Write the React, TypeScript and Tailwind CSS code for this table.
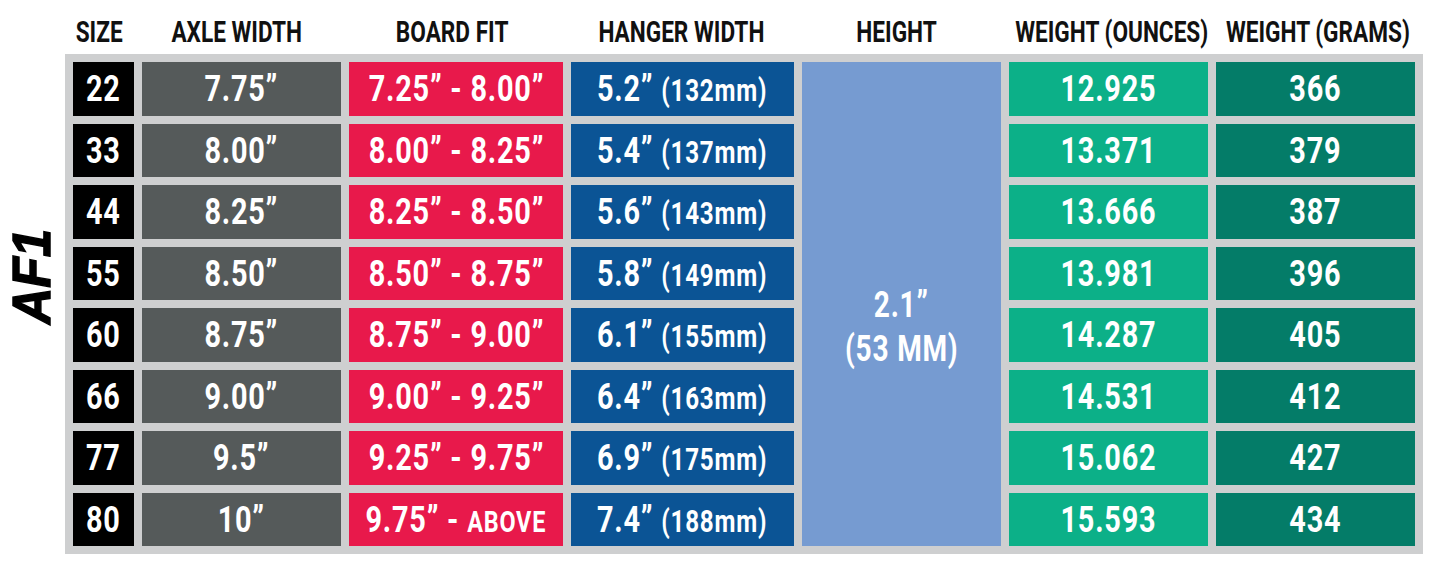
import React from "react";

const rows = [
  { s: "22", a: "7.75”", b1: "7.25” - 8.00”", b2: "", h1: "5.2”", h2: "(132mm)", oz: "12.925", g: "366" },
  { s: "33", a: "8.00”", b1: "8.00” - 8.25”", b2: "", h1: "5.4”", h2: "(137mm)", oz: "13.371", g: "379" },
  { s: "44", a: "8.25”", b1: "8.25” - 8.50”", b2: "", h1: "5.6”", h2: "(143mm)", oz: "13.666", g: "387" },
  { s: "55", a: "8.50”", b1: "8.50” - 8.75”", b2: "", h1: "5.8”", h2: "(149mm)", oz: "13.981", g: "396" },
  { s: "60", a: "8.75”", b1: "8.75” - 9.00”", b2: "", h1: "6.1”", h2: "(155mm)", oz: "14.287", g: "405" },
  { s: "66", a: "9.00”", b1: "9.00” - 9.25”", b2: "", h1: "6.4”", h2: "(163mm)", oz: "14.531", g: "412" },
  { s: "77", a: "9.5”", b1: "9.25” - 9.75”", b2: "", h1: "6.9”", h2: "(175mm)", oz: "15.062", g: "427" },
  { s: "80", a: "10”", b1: "9.75” - ", b2: "ABOVE", h1: "7.4”", h2: "(188mm)", oz: "15.593", g: "434" },
];

const font = { fontFamily: "Roboto, 'Liberation Sans', sans-serif" } as const;

function Cell({ bg, children }: { bg: string; children: React.ReactNode }) {
  return (
    <div className={`${bg} flex items-center justify-center text-white overflow-visible`}>
      <span className="inline-block whitespace-nowrap scale-x-[0.78] text-[37px] leading-none font-bold tracking-[1px]">
        {children}
      </span>
    </div>
  );
}

const headers = [
  { t: "SIZE", c: "-translate-x-[4px]" },
  { t: "AXLE WIDTH", c: "-translate-x-[5px]" },
  { t: "BOARD FIT", c: "-translate-x-[4px]" },
  { t: "HANGER WIDTH", c: "-translate-x-[1px]" },
  { t: "HEIGHT", c: "-translate-x-[5px]" },
  { t: "WEIGHT (OUNCES)", c: "translate-x-[3px]" },
  { t: "WEIGHT (GRAMS)", c: "translate-x-[2px]" },
];

export default function App() {
  return (
    <div className="w-[1445px] h-[568px] bg-white" style={font}>
      <div className="pl-[73px] h-[54px] grid grid-cols-[61px_199px_214px_223px_199px_199px_199px] gap-x-2 items-center">
        {headers.map((h) => (
          <div key={h.t} className="flex justify-center pt-[10px]">
            <span className={`inline-block whitespace-nowrap scale-x-[0.78] text-[29px] leading-none font-bold text-[#111] ${h.c}`}>
              {h.t}
            </span>
          </div>
        ))}
      </div>
      <div className="flex">
        <div className="w-[65px] flex items-center justify-center pb-[56px] pr-[2px]">
          <span
            className="inline-block -rotate-90 scale-x-[0.95] whitespace-nowrap text-[53px] leading-none font-bold italic text-black [-webkit-text-stroke:1.5px_black]"
            style={{ fontFamily: "'Liberation Sans', Arial, sans-serif" }}
          >
            AF1
          </span>
        </div>
        <div className="bg-[#cecfd0] p-2 grid grid-cols-[61px_199px_214px_223px_199px_199px_199px] grid-rows-[repeat(8,53.5px)] gap-2">
          <div className="col-start-5 row-start-1 row-span-8 bg-[#769bd1] flex flex-col items-center justify-center pt-[46px] text-white">
            <span className="inline-block whitespace-nowrap scale-x-[0.78] text-[36px] leading-[44px] font-bold tracking-[1px]">2.1”</span>
            <span className="inline-block whitespace-nowrap scale-x-[0.78] text-[36px] leading-[44px] font-bold tracking-[1px]">(53 MM)</span>
          </div>
          {rows.map((r) => (
            <React.Fragment key={r.s}>
              <Cell bg="bg-black">{r.s}</Cell>
              <Cell bg="bg-[#555a5a]">{r.a}</Cell>
              <Cell bg="bg-[#e8194b]">
                {r.b1}
                {r.b2 && <span className="text-[30px]">{r.b2}</span>}
              </Cell>
              <Cell bg="bg-[#0b5495]">
                {r.h1} <span className="text-[31px]">{r.h2}</span>
              </Cell>
              <Cell bg="bg-[#0cb088]">{r.oz}</Cell>
              <Cell bg="bg-[#047c68]">{r.g}</Cell>
            </React.Fragment>
          ))}
        </div>
      </div>
    </div>
  );
}
